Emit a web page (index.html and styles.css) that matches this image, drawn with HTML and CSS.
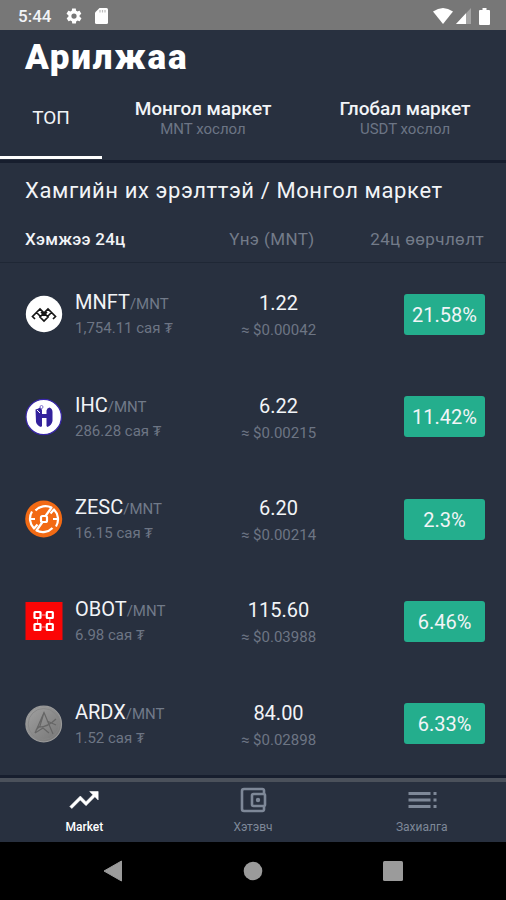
FILE: index.html
```html
<!DOCTYPE html>
<html lang="mn">
<head>
    <meta charset="UTF-8">
    <meta name="viewport" content="width=device-width, initial-scale=1.0">
    <title>Арилжаа</title>
    <link rel="stylesheet" href="styles.css">
</head>
<body>
    <div class="status-bar">
        <span class="clock">5:44</span>
        <svg class="gear" width="18" height="18" viewBox="0 0 24 24"><path fill="#fff" d="M19.4 13c0-.3.1-.6.1-1s0-.7-.1-1l2.1-1.600c.2-.2.2-.4.1-.7l-2-3.400c-.1-.3-.4-.3-.6-.3l-2.500 1c-.5-.4-1.100-.7-1.700-1l-.4-2.600c0-.2-.2-.4-.5-.4h-4c-.200 0-.5.200-.5.400l-.4 2.600c-.6.300-1.200.6-1.700 1l-2.500-1c-.2 0-.5 0-.6.300l-2 3.400c-.1.300-.1.500.1.700L4.600 11c0 .3-.1.600-.1 1s0 .7.100 1l-2.100 1.600c-.2.200-.2.400-.1.700l2 3.400c.1.300.4.300.6.300l2.500-1c.5.400 1.100.7 1.700 1l.4 2.600c0 .2.200.4.500.4h4c.2 0 .5-.2.500-.4l.4-2.600c.6-.3 1.200-.6 1.700-1l2.500 1c.2 0 .5 0 .6-.3l2-3.400c.1-.3.100-.5-.1-.7zM12 15.500A3.500 3.500 0 1 1 12 8.500a3.500 3.500 0 0 1 0 7z"/></svg>
        <svg class="sd" width="13" height="16" viewBox="0 0 13 16"><path fill="#fff" d="M4.500 0H11.500A1.500 1.500 0 0 1 13 1.500V14.500A1.500 1.500 0 0 1 11.500 16H1.500A1.500 1.500 0 0 1 0 14.500V4.500z"/><path stroke="#bbb" stroke-width="1.200" d="M5 2v2.500M7.500 2v2.500M10 2v2.500"/></svg>
        <div class="signals">
            <svg width="20" height="16" viewBox="0 0 20 16"><path fill="#fff" d="M0 3.500Q10-3.500 20 3.500L10 16z"/></svg>
            <svg width="15" height="16" viewBox="0 0 15 16"><path fill="#a3a3a3" d="M15 0V16H0z"/><path fill="#fff" d="M10 5.300V16H0z"/></svg>
            <svg width="11" height="17" viewBox="0 0 11 17"><path fill="#fff" d="M3.500 0h4v2H10a1 1 0 0 1 1 1v13a1 1 0 0 1-1 1H1a1 1 0 0 1-1-1V3a1 1 0 0 1 1-1h2.500z"/></svg>
        </div>
    </div>

    <h1>Арилжаа</h1>

    <div class="tabs">
        <div class="tab active"><span class="tab-name">ТОП</span></div>
        <div class="tab">
            <span class="tab-name">Монгол маркет</span>
            <span class="tab-sub">MNT хослол</span>
        </div>
        <div class="tab">
            <span class="tab-name">Глобал маркет</span>
            <span class="tab-sub">USDT хослол</span>
        </div>
    </div>

    <h2>Хамгийн их эрэлттэй / Монгол маркет</h2>

    <div class="columns">
        <span class="col-volume">Хэмжээ 24ц</span>
        <span class="col-price">Үнэ (MNT)</span>
        <span class="col-change">24ц өөрчлөлт</span>
    </div>

    <div class="list">
        <div class="row">
            <svg class="coin" viewBox="0 0 38 38"><circle cx="19" cy="19" r="18.200" fill="#fff"/><path fill="none" stroke="#161616" stroke-width="1.700" d="M10 24L7.500 21.500L15 14L23 22L19 26L15 22L23 14L30.500 21.500L28 24M11.500 17.500l4 4M26.500 17.500l-4 4M16 17l3 3 3-3"/></svg>
            <div class="pair">
                <div class="name">MNFT<span>/MNT</span></div>
                <div class="volume">1,754.11 сая ₮</div>
            </div>
            <div class="price">
                <div class="amount">1.22</div>
                <div class="usd">≈ $0.00042</div>
            </div>
            <div class="change">21.58%</div>
        </div>
        <div class="row">
            <svg class="coin" viewBox="0 0 38 38"><circle cx="18.700" cy="19" r="17.700" fill="#fff" stroke="#3826a8" stroke-width="1.200"/><path fill="#33219c" d="M10.500 11.500Q13 11 15 9.500Q17 10.500 17 12.500V16h4.500v-3.500Q22 10 24.500 9.500Q27.500 10.500 27.500 14v9Q26.500 27.500 22.500 29L21.500 28V20H17v8l-1 1Q12 27.500 11 24z"/><circle cx="16.500" cy="9" r="1.500" fill="#fff" stroke="#6556bf" stroke-width=".8"/><path stroke="#fff" d="M12 12l3 3"/></svg>
            <div class="pair">
                <div class="name">IHC<span>/MNT</span></div>
                <div class="volume">286.28 сая ₮</div>
            </div>
            <div class="price">
                <div class="amount">6.22</div>
                <div class="usd">≈ $0.00215</div>
            </div>
            <div class="change">11.42%</div>
        </div>
        <div class="row">
            <svg class="coin" viewBox="0 0 38 38"><circle cx="18.700" cy="19" r="18.500" fill="#f26a14"/><g fill="none" stroke="#fff" stroke-width="2.200" stroke-linejoin="round"><path d="M10.500 10.500A13.500 13.500 0 0 1 26.500 7.500L20.500 16M27.500 28A13.500 13.500 0 0 1 11.500 30.500L17.500 22M7 11.500A14 14 0 0 0 9 28.500L12.500 24.500M31 26.500A14 14 0 0 0 29 9.500L25.500 13.500M5 19H10M28 19H33"/><rect x="16" y="16" width="6" height="6" rx="1.500"/></g></svg>
            <div class="pair">
                <div class="name">ZESC<span>/MNT</span></div>
                <div class="volume">16.15 сая ₮</div>
            </div>
            <div class="price">
                <div class="amount">6.20</div>
                <div class="usd">≈ $0.00214</div>
            </div>
            <div class="change">2.3%</div>
        </div>
        <div class="row">
            <svg class="coin" viewBox="0 0 38 38"><path fill="#fb0505" d="M.5 0h37v38H.5z"/><g fill="none" stroke="#fff" stroke-width="2.200"><rect x="9.500" y="10" width="6" height="6" rx=".5"/><rect x="21.800" y="10" width="6" height="6" rx=".5"/><rect x="9.500" y="22" width="6" height="6" rx=".5"/><rect x="21.800" y="22" width="6" height="6" rx=".5"/><path stroke="#ffa0a0" stroke-width="1.200" d="M17 13h4M17 25h4M12.500 17v4M24.800 17v4"/></g></svg>
            <div class="pair">
                <div class="name">OBOT<span>/MNT</span></div>
                <div class="volume">6.98 сая ₮</div>
            </div>
            <div class="price">
                <div class="amount">115.60</div>
                <div class="usd">≈ $0.03988</div>
            </div>
            <div class="change">6.46%</div>
        </div>
        <div class="row">
            <svg class="coin" viewBox="0 0 38 38"><defs><linearGradient id="silver" x2="1" y2="1"><stop stop-color="#a2a2a2"/><stop offset="1" stop-color="#747474"/></linearGradient></defs><circle cx="18.700" cy="19" r="17.800" fill="url(#silver)" stroke="#999" stroke-width="1.200"/><circle cx="18.700" cy="19" r="15.500" fill="none" stroke="#858585" stroke-width=".8"/><path fill="none" stroke="#666" stroke-width="1.200" d="M10 28L19 7.500L28 29M19 7.500L15 21L11 25M12 22Q22 23 31 14M22 16L31 20M10 28L18 23L24 28"/></svg>
            <div class="pair">
                <div class="name">ARDX<span>/MNT</span></div>
                <div class="volume">1.52 сая ₮</div>
            </div>
            <div class="price">
                <div class="amount">84.00</div>
                <div class="usd">≈ $0.02898</div>
            </div>
            <div class="change">6.33%</div>
        </div>
    </div>

    <div class="bottom-nav">
        <div class="nav-item active">
            <svg width="34" height="34" viewBox="0 0 24 24"><path fill="currentColor" stroke="currentColor" stroke-width=".4" d="M16 6l2.290 2.290-4.880 4.880-4-4L2 16.590 3.410 18l6-6 4 4 6.300-6.290L22 12V6z"/></svg>
            <span>Market</span>
        </div>
        <div class="nav-item">
            <svg width="34" height="34" viewBox="0 0 34 34"><g fill="none" stroke="currentColor" stroke-width="2.600"><path d="M28 11V7.500a1.500 1.500 0 0 0-1.500-1.500H8a2 2 0 0 0-2 2v18a2 2 0 0 0 2 2h18.500a1.500 1.500 0 0 0 1.500-1.500V23"/><rect x="16" y="11" width="13" height="12" rx="1.500"/></g><circle cx="22" cy="17" r="2.200" fill="currentColor"/></svg>
            <span>Хэтэвч</span>
        </div>
        <div class="nav-item">
            <svg width="34" height="34" viewBox="0 0 34 34"><path fill="none" stroke="currentColor" stroke-width="2.800" d="M3.500 10.500h22M3.500 17h22M3.500 23.500h22M28.500 10.500h3M28.500 17h3M28.500 23.500h3"/></svg>
            <span>Захиалга</span>
        </div>
    </div>

    <div class="system-nav">
        <svg width="20" height="22" viewBox="0 0 20 22"><path fill="#9b9b9b" d="M18.500 1v20L1 11z" stroke="#9b9b9b" stroke-linejoin="round"/></svg>
        <svg width="20" height="20" viewBox="0 0 20 20"><circle cx="10" cy="10" r="9.300" fill="#9b9b9b"/></svg>
        <svg width="20" height="20" viewBox="0 0 20 20"><rect width="20" height="20" rx="1.500" fill="#9b9b9b"/></svg>
    </div>
</body>
</html>
```
FILE: styles.css
```css
* {
    box-sizing: border-box;
}

body {
    margin: 0;
    height: 900px;
    display: flex;
    flex-direction: column;
    overflow: hidden;
    background-color: #28303f;
    color: #f2f4f7;
    font-family: Roboto, "Noto Sans", sans-serif;
}

svg {
    display: block;
    flex-shrink: 0;
}

.status-bar {
    height: 30px;
    display: flex;
    align-items: center;
    padding: 2px 16px 0 18px;
    background-color: #777;
    flex-shrink: 0;
}

.clock {
    width: 47px;
    font-size: 17px;
    font-weight: 500;
    line-height: 20px;
}

.sd {
    margin-left: 12px;
}

.signals {
    display: flex;
    align-items: center;
    margin-left: auto;
    gap: 3px;
}

.signals svg:last-child {
    margin-left: 5px;
}

h1 {
    margin: 0;
    height: 54px;
    padding: 0 25px;
    font-size: 35px;
    font-weight: 900;
    line-height: 55px;
    letter-spacing: 1.8px;
    color: #fff;
}

.tabs {
    height: 79px;
    display: flex;
    border-bottom: 3px solid #171e2e;
}

.tab {
    width: 202px;
    height: 75px;
    display: flex;
    flex-direction: column;
    align-items: center;
    padding-top: 13px;
}

.tab.active {
    width: 102px;
    justify-content: center;
    padding: 0 0 5px;
    border-bottom: 3px solid #fff;
}

.tab-name {
    font-size: 19px;
    font-weight: 500;
    line-height: 23px;
    letter-spacing: -0.05px;
}

.active .tab-name {
    font-weight: 400;
}

.tab-sub {
    font-size: 15px;
    line-height: 18px;
    color: #6c7585;
}

h2 {
    margin: 0;
    height: 54px;
    padding-left: 25px;
    font-size: 22px;
    font-weight: 400;
    line-height: 56px;
    letter-spacing: 0.6px;
    white-space: nowrap;
}

.columns {
    height: 46px;
    display: flex;
    align-items: center;
    padding: 0 22px 2px 25px;
    border-bottom: 1px solid #1f2735;
    font-size: 17px;
    letter-spacing: 0.4px;
    color: #737b89;
}

.col-volume {
    width: 180px;
    font-weight: 500;
    letter-spacing: 0.25px;
    color: #f2f4f7;
}

.col-price {
    width: 134px;
    text-align: center;
}

.col-change {
    flex: 1;
    text-align: right;
}

.list {
    height: 512px;
    display: flex;
    flex-direction: column;
}

.row {
    flex: 1;
    display: flex;
    align-items: center;
    padding: 0 21px 0 25px;
}

.coin {
    width: 38px;
    height: 38px;
}

.pair {
    width: 141px;
    margin-left: 12px;
    padding-top: 2px;
}

.name {
    font-size: 20px;
    line-height: 24px;
    white-space: nowrap;
}

.name span {
    font-size: 15px;
    color: #717a89;
}

.volume, .usd {
    font-size: 15px;
    line-height: 24px;
    color: #6d7584;
}

.price {
    width: 125px;
    padding-top: 6px;
    text-align: center;
}

.amount {
    font-size: 20px;
    line-height: 26px;
}

.price .usd {
    line-height: 28px;
}

.change {
    width: 81px;
    height: 41px;
    margin-left: auto;
    border-radius: 3px;
    background-color: #24ae8d;
    font-size: 20px;
    line-height: 43px;
    text-align: center;
}

.bottom-nav {
    height: 67px;
    display: flex;
    border-top: 3px solid #171e2e;
    box-shadow: inset 0 4px 0 #4b515b;
    flex-shrink: 0;
}

.nav-item {
    flex: 1;
    display: flex;
    flex-direction: column;
    align-items: center;
    padding-top: 5px;
    font-size: 12px;
    line-height: 20px;
    color: #7e8898;
}

.nav-item.active {
    color: #fff;
    font-weight: 500;
}

.system-nav {
    flex: 1;
    display: flex;
    justify-content: center;
    align-items: center;
    gap: 120px;
    background-color: #000;
}
```
